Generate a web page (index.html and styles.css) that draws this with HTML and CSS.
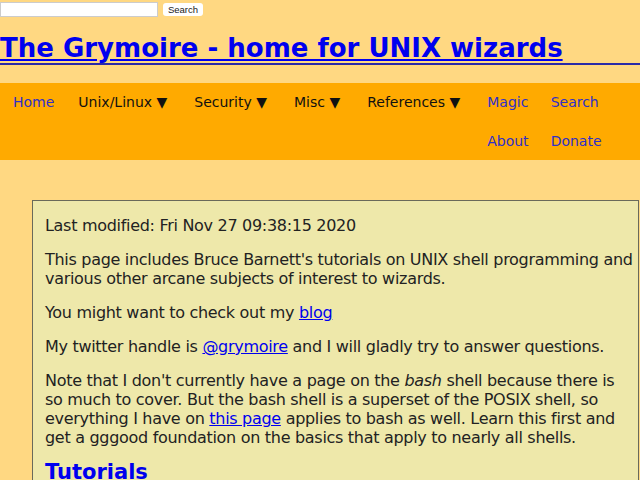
FILE: index.html
```html
<!DOCTYPE html>
<html>
<head>
<meta charset="utf-8">
<link rel="stylesheet" href="styles.css">
</head>
<body>
<form class="search">
  <input class="search-input" type="text">
  <button class="search-btn" type="button">Search</button>
</form>
<h1 class="site-title"><a href="#">The Grymoire - home for UNIX wizards</a></h1>
<nav class="nav">
  <a class="nav-link" href="#">Home</a>
  <span class="nav-drop">Unix/Linux ▼</span>
  <span class="nav-drop">Security ▼</span>
  <span class="nav-drop">Misc ▼</span>
  <span class="nav-drop">References ▼</span>
  <div class="nav-grid">
    <a class="nav-link" href="#">Magic</a>
    <a class="nav-link" href="#">Search</a>
    <a class="nav-link" href="#">About</a>
    <a class="nav-link" href="#">Donate</a>
  </div>
</nav>
<main class="content">
  <p>Last modified: Fri Nov 27 09:38:15 2020</p>
  <p>This page includes Bruce Barnett's tutorials on UNIX shell programming and various other arcane subjects of interest to wizards.</p>
  <p>You might want to check out my <a href="#">blog</a></p>
  <p>My twitter handle is <a href="#">@grymoire</a> and I will gladly try to answer questions.</p>
  <p>Note that I don't currently have a page on the <i>bash</i> shell because there is so much to cover. But the bash shell is a superset of the POSIX shell, so everything I have on <a href="#">this page</a> applies to bash as well. Learn this first and get a gggood foundation on the basics that apply to nearly all shells.</p>
  <h2 class="section-title"><a href="#">Tutorials</a></h2>
</main>
</body>
</html>
```
FILE: styles.css
```css
html, body {
  margin: 0;
  padding: 0;
  background: #ffd882;
  font-family: "DejaVu Sans", Verdana, sans-serif;
  color: #222;
  overflow: hidden;
}
.search {
  display: flex;
  align-items: center;
  gap: 5px;
  height: 18px;
  padding-top: 0;
}
.search-input {
  width: 158px;
  height: 15px;
  box-sizing: border-box;
  margin: 0;
  border: 1px solid #ccc;
  background: #fff;
  padding: 0;
}
.search-btn {
  margin: 0;
  height: 13px;
  width: 40px;
  box-sizing: border-box;
  padding: 0;
  border: none;
  border-radius: 3px;
  background: #fff;
  font-family: "Liberation Sans", Arial, sans-serif;
  font-size: 9.5px;
  color: #222;
  line-height: 13px;
}
.site-title {
  margin: 15px 0 18px;
  font-size: 26px;
  line-height: 30px;
  font-weight: bold;
  border-bottom: 2px solid #2a2aa8;
  padding-bottom: 0;
}
.site-title a {
  color: #0000ee;
}
.nav {
  display: flex;
  align-items: flex-start;
  background: #ffaa00;
  height: 77px;
  padding-left: 13px;
  font-size: 14px;
  line-height: 17px;
}
.nav > * {
  margin-top: 11px;
}
.nav-link {
  color: #3030c8;
  text-decoration: none;
}
.nav-drop {
  color: #111;
}
.nav > .nav-link { margin-right: 24px; }
.nav > .nav-drop { margin-right: 27px; }
.nav-grid {
  display: grid;
  grid-template-columns: auto auto;
  column-gap: 22px;
  row-gap: 22px;
}
.content {
  margin: 40px 1px 0 32px;
  background: #eee8aa;
  border: 1px solid #6a6a5a;
  padding: 0 3px 0 12px;
  font-size: 16px;
  line-height: 19px;
  letter-spacing: -0.3px;
}
.content p {
  margin: 15px 0;
}
.content a {
  color: #0000ee;
}
.section-title {
  font-size: 21px;
  line-height: 20px;
  margin: 15px 0;
  letter-spacing: 0;
}
```
